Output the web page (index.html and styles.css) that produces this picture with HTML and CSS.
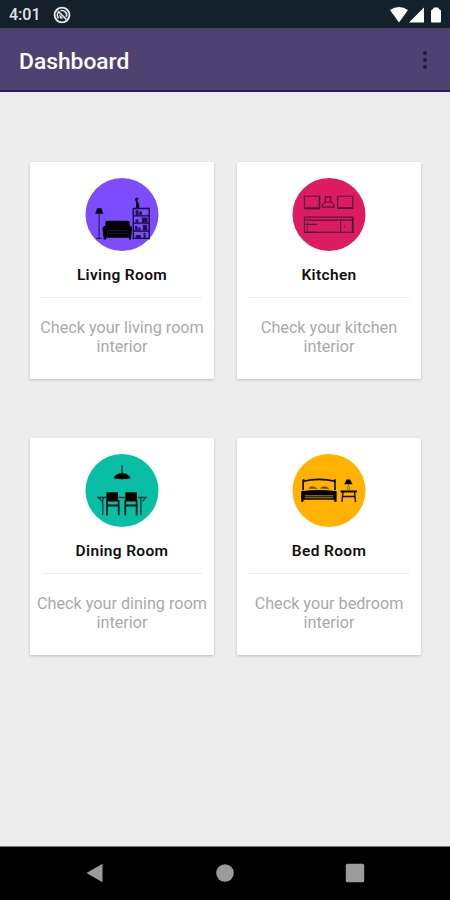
FILE: index.html
```
<!DOCTYPE html>
<html lang="en">
<head>
    <meta charset="UTF-8">
    <meta name="viewport" content="width=device-width, initial-scale=1.0">
    <title>Dashboard</title>
    <link rel="stylesheet" href="styles.css">
</head>
<body>
    <div class="status-bar">
        <span class="time">4:01</span>
        <svg class="status-app" viewBox="0 0 18 18">
            <circle cx="9" cy="9" r="7.4" fill="none" stroke="#e4e6e8" stroke-width="1.9"/>
            <path d="M5.500 12.200A4.600 4.600 0 0 1 5.600 6M7.500 4.800a4.600 4.600 0 0 1 5.800 6" fill="none" stroke="#e4e6e8" stroke-width="1.700"/>
            <path d="M5 5l8.500 8.500" stroke="#e4e6e8" stroke-width="1.700"/>
            <path d="M6 8l4.500 4.500H7z" fill="#e4e6e8"/>
        </svg>
        <svg class="status-icons" viewBox="0 0 52 16">
            <path d="M0 3Q9 -3 18 3L9 15.5z" fill="#fff"/>
            <path d="M19 15.5L34 .5v15z" fill="#fff"/>
            <path d="M41 4q0-1.500 1.500-1.500L44 .5h4l1.500 2Q51 2.500 51 4v10.500q0 1-1 1h-8q-1 0-1-1z" fill="#fff"/>
        </svg>
    </div>

    <header class="app-bar">
        <h1>Dashboard</h1>
        <div class="menu">
            <span></span>
            <span></span>
            <span></span>
        </div>
    </header>

    <main class="dashboard">
        <div class="card">
            <svg class="card-icon" viewBox="17 24 220 220">
                <circle cx="127" cy="134" r="110" fill="#7c4dff"/>
                <!-- lamp -->
                <path d="M52 115h13l6 17H46z"/>
                <path d="M58 132v73M49 206h17" stroke="#1a1040" stroke-width="3"/>
                <!-- sofa -->
                <path d="M77 156q3-3 8-3h56q6 0 9 3v12q8 0 7 10l-3 31h-6v-5H79v5h-7l-4-31q0-9 9-10z"/>
                <path d="M84 182h58M86 192h54M83 181v20M145 181v20" stroke="#2c1c66" stroke-width="2"/>
                <!-- bookshelf -->
                <path d="M161 209v-93h48v93M161 206h48M163 138h44M163 160h44M163 184h44" fill="none" stroke="#120a30" stroke-width="4"/>
                <path d="M168 121h9v15h-9zM179 125h8v11h-8zM187 143h17v16h-17zM168 149h8v10h-8zM166 169h8v14h-8zM176 173h7v10h-7zM190 165h13v18h-13zM168 196h16v9h-16zM192 190h6v15h-6z" fill="#22134f"/>
                <path d="M169 114l1-15-4-12 6-5 5 4-4 6 6 12v10z"/>
            </svg>
            <h2>Living Room</h2>
            <hr>
            <p>Check your living room interior</p>
        </div>

        <div class="card">
            <svg class="card-icon" viewBox="17 24 220 220">
                <circle cx="127" cy="134" r="110" fill="#dc1b60"/>
                <g fill="none" stroke="#521a3c" stroke-width="3.500">
                    <!-- wall cabinets and hood -->
                    <path d="M53 79h46v36H53zM153 79h46v36h-46z"/>
                    <path d="M116 81h16v13l10 12v6h-35v-6l9-12zM116 97h17"/>
                    <!-- counter -->
                    <path d="M53 142h146v46H53zM53 151h146M162 151v37M55 164h36"/>
                    <path d="M62 157v28M174 166v8" stroke-width="2"/>
                </g>
                <path d="M98 80v36H54M153 115h46M198 142v47M53 188h40" fill="none" stroke="#35122f" stroke-width="4"/>
            </svg>
            <h2>Kitchen</h2>
            <hr>
            <p>Check your kitchen interior</p>
        </div>

        <div class="card">
            <svg class="card-icon" viewBox="17 21 220 220">
                <circle cx="127" cy="131" r="110" fill="#08bfa5"/>
                <!-- pendant lamp -->
                <path d="M127 55v26" stroke="#07231f" stroke-width="4"/>
                <path d="M121 79h12q17 4 20 15-26 6-51 0 3-11 19-15z"/>
                <!-- table -->
                <path d="M52 152h27M117 152h18M175 152h27M69 152v53M184 152v53M58 154l8 10M197 154l-8 10" fill="none" stroke="#063b35" stroke-width="4"/>
                <!-- chairs -->
                <path d="M80 136h35v28H80zM137 136h35v28h-35z"/>
                <path d="M82 160v46M117 160v46M137 160v46M171 160v46" stroke="#03110f" stroke-width="5"/>
                <path d="M80 176h38M136 176h37" stroke="#03110f" stroke-width="6"/>
            </svg>
            <h2>Dining Room</h2>
            <hr>
            <p>Check your dining room interior</p>
        </div>

        <div class="card">
            <svg class="card-icon" viewBox="17 21 220 220">
                <circle cx="127" cy="131" r="110" fill="#ffb300"/>
                <!-- bed -->
                <path d="M49 130v-27q48-11 96 0v27" fill="none" stroke="#0c0800" stroke-width="5"/>
                <path d="M48 97h5v9h-5zM142 97h5v9h-5z"/>
                <path d="M66 124q11-9 25 1zM101 124q13-9 26 1z" fill="#694b06" stroke="#694b06" stroke-width="2"/>
                <path d="M43 133q55-7 107 0v32h-7v-6H50v6h-7z"/>
                <path d="M54 147h86M54 153h86" stroke="#c18a10" stroke-width="3"/>
                <!-- nightstand -->
                <path d="M162 131h49v6h-49z"/>
                <path d="M169 135l-3 31M204 135l3 31M168 149h38" fill="none" stroke="#0c0800" stroke-width="4"/>
                <path d="M180 98h10l8 14h-25z"/>
                <path d="M185 112v6q-6 5-1 12h4q5-7-1-12" fill="none" stroke="#7a5808" stroke-width="2"/>
            </svg>
            <h2>Bed Room</h2>
            <hr>
            <p>Check your bedroom interior</p>
        </div>
    </main>

    <nav class="nav-bar">
        <svg viewBox="0 0 20 20"><path d="M1.500 10L17.500 .8v18.400z"/></svg>
        <svg viewBox="0 0 20 20"><circle cx="10" cy="10" r="8.800"/></svg>
        <svg viewBox="0 0 20 20"><rect x=".8" y=".8" width="18.400" height="18.400" rx="1.500"/></svg>
    </nav>
</body>
</html>
```
FILE: styles.css
```
*{
    margin: 0;
    padding: 0;
    box-sizing: border-box;
}
body{
    display: flex;
    flex-direction: column;
    height: 900px;
    background-color: #ededed;
    font-family: Roboto, "Liberation Sans", sans-serif;
}
.status-bar{
    display: flex;
    align-items: center;
    height: 28px;
    padding: 1px 8px 0 9px;
    background-color: #14202a;
}
.time{
    width: 44px;
    font-size: 16px;
    font-weight: 500;
    color: #e2e4e6;
}
.status-app{
    width: 18px;
    height: 18px;
}
.status-icons{
    width: 52px;
    height: 16px;
    margin-left: auto;
}
.app-bar{
    display: flex;
    align-items: center;
    justify-content: space-between;
    height: 64px;
    padding: 3px 23px 0 19px;
    background-color: #4e4273;
    border-top: 1px solid #48426b;
    border-bottom: 2px solid #2c1c62;
}
.app-bar h1{
    font-size: 22.8px;
    font-weight: 500;
    color: #fff;
}
.menu{
    display: flex;
    flex-direction: column;
    gap: 3px;
    padding-bottom: 2px;
}
.menu span{
    width: 4px;
    height: 4px;
    border-radius: 50%;
    background-color: #251b3d;
}

.dashboard{
    flex: 1;
    display: grid;
    grid-template-columns: 184px 184px;
    grid-auto-rows: 217px;
    gap: 59px 23px;
    padding: 70px 0 0 30px;
}
.card{
    display: flex;
    flex-direction: column;
    align-items: center;
    padding-top: 16px;
    background-color: #fff;
    border-radius: 1px;
    box-shadow: 0 1px 3px rgba(0, 0, 0, .2);
}
.card-icon{
    width: 74px;
    height: 73px;
}
.card h2{
    margin-top: 14px;
    font-size: 15.5px;
    line-height: 20px;
    font-weight: 600;
    letter-spacing: .35px;
    color: #111;
}
.card hr{
    width: 160px;
    height: 1px;
    margin-top: 12px;
    border: none;
    background-color: #ebebeb;
}
.card p{
    width: 180px;
    margin-top: 20px;
    font-size: 16.2px;
    line-height: 19px;
    text-align: center;
    color: #a9a9a9;
}

.nav-bar{
    display: flex;
    justify-content: center;
    align-items: center;
    gap: 110px;
    height: 54px;
    padding-bottom: 1px;
    background-color: #000;
    border-top: 1px solid #777;
}
.nav-bar svg{
    width: 20px;
    height: 20px;
    fill: #9b9b9b;
}
```
